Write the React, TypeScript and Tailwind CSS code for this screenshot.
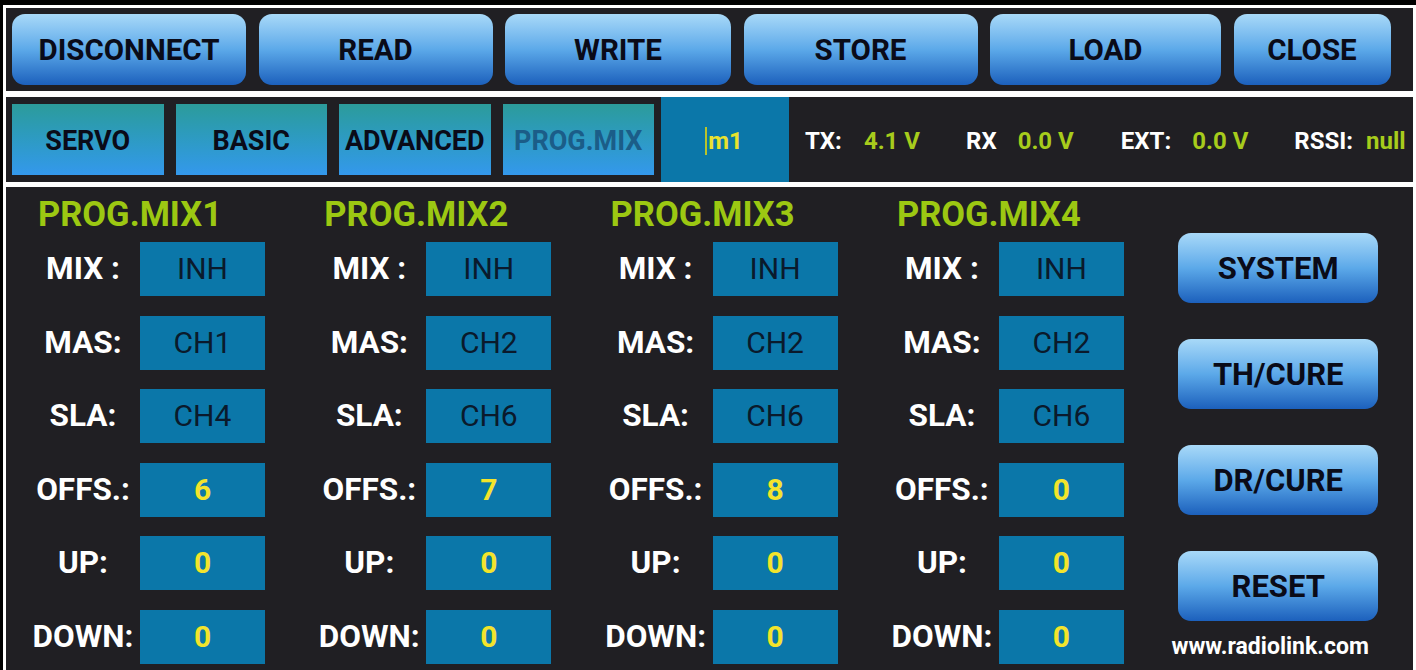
import React from 'react';

const FONT = { fontFamily: 'Roboto, "Liberation Sans", Arial, sans-serif' };

const topButtons = [
  { label: 'DISCONNECT', w: 'w-[234px]' },
  { label: 'READ', w: 'w-[234px]' },
  { label: 'WRITE', w: 'w-[226px]' },
  { label: 'STORE', w: 'w-[234px]' },
  { label: 'LOAD', w: 'w-[231px]' },
  { label: 'CLOSE', w: 'w-[157px]' },
];

const tabs = ['SERVO', 'BASIC', 'ADVANCED', 'PROG.MIX'];

type Mix = {
  title: string;
  mas: string;
  sla: string;
  offs: string;
  up: string;
  down: string;
};

const mixes: Mix[] = [
  { title: 'PROG.MIX1', mas: 'CH1', sla: 'CH4', offs: '6', up: '0', down: '0' },
  { title: 'PROG.MIX2', mas: 'CH2', sla: 'CH6', offs: '7', up: '0', down: '0' },
  { title: 'PROG.MIX3', mas: 'CH2', sla: 'CH6', offs: '8', up: '0', down: '0' },
  { title: 'PROG.MIX4', mas: 'CH2', sla: 'CH6', offs: '0', up: '0', down: '0' },
];

const sideButtons = ['SYSTEM', 'TH/CURE', 'DR/CURE', 'RESET'];

const btnGradient =
  'bg-gradient-to-b from-[#a8d9f8] via-[#5ca9e9] to-[#1c60bc] rounded-[13px] flex items-center justify-center text-[#0a0b18] font-bold';

const Row = ({ label, value, number }: { label: string; value: string; number?: boolean }) => (
  <div className="flex h-[54px] items-center">
    <div className="w-[106px] text-center text-white font-bold text-[31.5px] leading-none">{label}</div>
    <div className="ml-[4px] w-[125px] h-full bg-[#0b77a9] flex items-center justify-center">
      {number ? (
        <span className="text-[#f3e42c] font-bold text-[30px] leading-none">{value}</span>
      ) : (
        <span className="text-[#0a1a2c] text-[30px] leading-none">{value}</span>
      )}
    </div>
  </div>
);

const App: React.FC = () => {
  return (
    <div className="w-[1416px] h-[670px] bg-black pt-[5px] pl-[3px] overflow-hidden" style={FONT}>
      <div className="h-full bg-white pt-[3px] pl-[3px] pr-[3px] flex flex-col">
        {/* Top action bar */}
        <div className="h-[83px] bg-[#201f23] flex items-center pl-[6px] gap-[12.5px]">
          {topButtons.map((b) => (
            <div key={b.label} className={`${b.w} h-[71px] ${btnGradient} text-[29.5px] pt-[2px]`}>
              {b.label}
            </div>
          ))}
        </div>

        {/* Tabs + status */}
        <div className="mt-[6px] h-[85px] bg-[#201f23] flex items-center pl-[6px]">
          <div className="flex gap-[12px]">
            {tabs.map((t) => (
              <div
                key={t}
                className={`w-[151.5px] h-[71px] pt-[4px] bg-gradient-to-b from-[#2c9b9a] to-[#3498ec] flex items-center justify-center font-bold text-[27px] ${
                  t === 'PROG.MIX' ? 'text-[#1b5d88]' : 'text-[#0a0b18]'
                }`}
              >
                {t}
              </div>
            ))}
          </div>
          <div className="ml-[7px] w-[128px] h-full bg-[#0b77a9] flex items-center justify-center pt-[2px]">
            <span className="w-[2px] h-[28px] bg-[#b9c42a] mr-[1px]" />
            <span className="text-[#e9e22e] font-bold text-[24px] leading-none pr-[2px]">m1</span>
          </div>
          <div className="flex items-center text-[24px] font-bold leading-none pt-[2px]">
            <span className="ml-[16px] text-white">TX:</span>
            <span className="ml-[22px] text-[#a7cc1c]">4.1 V</span>
            <span className="ml-[46px] text-white">RX</span>
            <span className="ml-[21px] text-[#a7cc1c]">0.0 V</span>
            <span className="ml-[47px] text-white">EXT:</span>
            <span className="ml-[21px] text-[#a7cc1c]">0.0 V</span>
            <span className="ml-[46px] text-white">RSSI:</span>
            <span className="ml-[13px] text-[#a7cc1c]">null</span>
          </div>
        </div>

        {/* Prog mix panel */}
        <div className="mt-[5px] flex-1 bg-[#201f23] flex pl-[24px]">
          {mixes.map((m) => (
            <div key={m.title} className="w-[286.3px] flex flex-col">
              <div className="h-[55px] flex items-center pl-[8px] text-[#9cc812] font-bold text-[34.5px] leading-none">
                {m.title}
              </div>
              <div className="flex flex-col gap-[19.5px]">
                <Row label="MIX :" value="INH" />
                <Row label="MAS:" value={m.mas} />
                <Row label="SLA:" value={m.sla} />
                <Row label="OFFS.:" value={m.offs} number />
                <Row label="UP:" value={m.up} number />
                <Row label="DOWN:" value={m.down} number />
              </div>
            </div>
          ))}
          <div className="flex flex-col pt-[46px] pl-[3px]">
            <div className="flex flex-col gap-[36px]">
              {sideButtons.map((s) => (
                <div key={s} className={`w-[200px] h-[70px] ${btnGradient} text-[31px] pt-[2px]`}>
                  {s}
                </div>
              ))}
            </div>
            <div className="mt-[13px] -ml-[8px] w-[200px] text-center text-white font-bold text-[23px] leading-[26px]">
              www.radiolink.com
            </div>
          </div>
        </div>
      </div>
    </div>
  );
};

export default App;
